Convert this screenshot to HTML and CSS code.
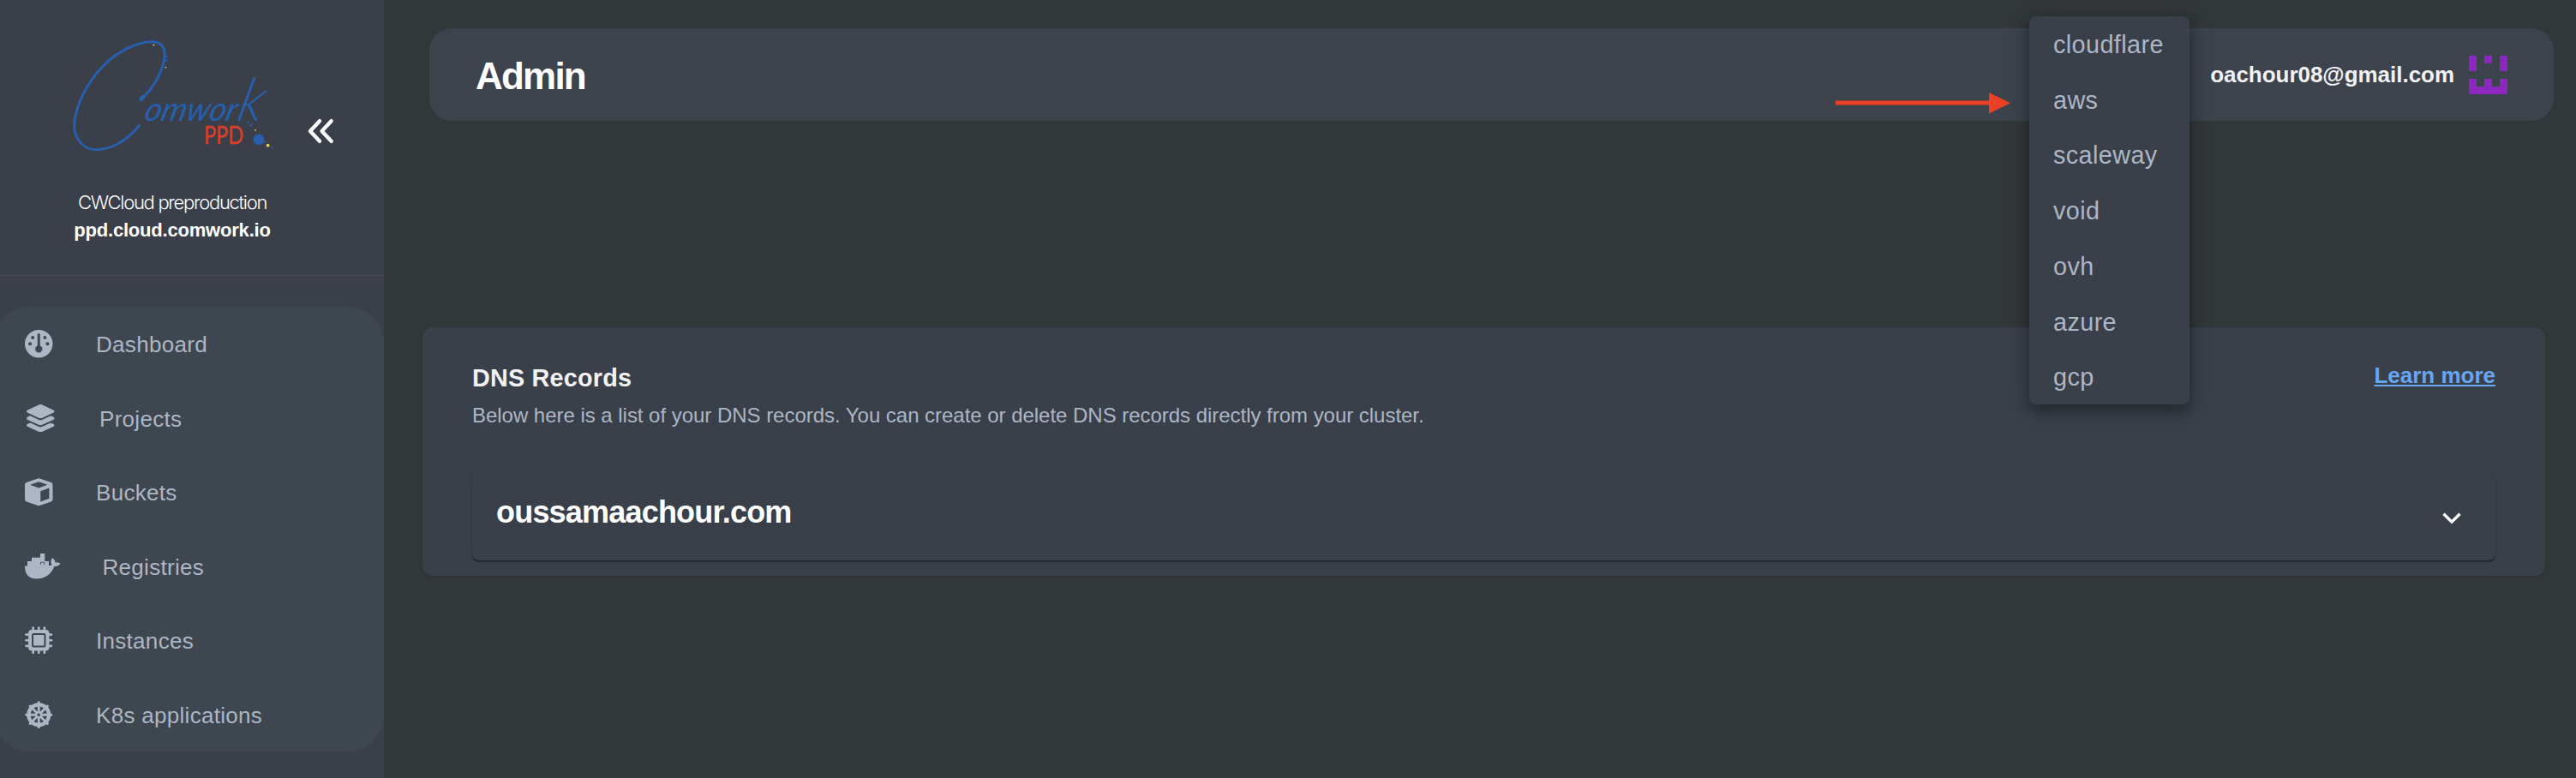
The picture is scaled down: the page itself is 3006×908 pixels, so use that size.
FILE: index.html
```html
<!DOCTYPE html>
<html lang="en">
<head>
<meta charset="utf-8">
<title>Admin</title>
<link rel="stylesheet" href="styles.css">
</head>
<body>
<div class="app">
  <aside class="sidebar">
    <div class="sidebar-head">
      <div class="brand">
        <svg class="logo" viewBox="72 40 258 145" role="img" aria-label="Comwork PPD">
          <path class="logo-swash" d="M165.700 115C174 107 181 97 184.500 90C189 81 192 71 192.300 64C192.500 54 187 48.700 176.700 48.700C167 48.800 157 52 146.700 57.300C133 64.500 122 74 113.300 85C104.500 96 97.500 107 93.300 118.300C89.500 128 87 137 86.700 145C86.500 152 87.500 158 91.700 163.500C96.500 170.500 103 174.700 111.700 174.700C120 174.700 128 173 136.700 168.300C146 163 156 155 162.700 146"/>
          <path class="logo-knob" d="M164.800 115.600l2.400-2.600"/>
          <text class="logo-word" transform="translate(167 141) skewX(-14)" textLength="137" lengthAdjust="spacingAndGlyphs">omwor<tspan class="logo-k">k</tspan></text>
          <text class="logo-tag" x="238" y="168" textLength="46" lengthAdjust="spacingAndGlyphs">PPD</text>
          <g class="logo-blue">
            <circle cx="195" cy="66" r="1.300"/><circle cx="194.300" cy="70.600" r="1.500"/>
            <circle cx="289.500" cy="142.500" r="1.300"/><circle cx="292.600" cy="146" r="1.500"/>
            <path d="M302 156.500a6.200 6.200 0 0 1 6 7.500l2 2.500-4 1a6.300 6.300 0 1 1-4-11z"/>
            <circle cx="317.300" cy="172.300" r="1"/>
          </g>
          <g class="logo-gold">
            <circle cx="179.300" cy="52.600" r="1"/><circle cx="193.500" cy="78.600" r=".9"/>
            <circle cx="298" cy="152" r=".9"/><circle cx="312.600" cy="169.700" r="1.900"/>
          </g>
        </svg>
        <div class="brand-name">CWCloud preproduction</div>
        <div class="brand-host">ppd.cloud.comwork.io</div>
      </div>
      <svg class="collapse" viewBox="0 0 32 30"><path d="M15 3.200L4 15l11 11.800M28.600 3.200L17.600 15l11 11.800"/></svg>
    </div>
    <nav class="nav">
      <a class="nav-item">
        <svg class="icon" viewBox="0 0 32 32"><circle class="fill" cx="16" cy="16" r="16"/><g class="cut"><circle cx="9" cy="8.800" r="2"/><circle cx="23" cy="8.800" r="2"/><circle cx="6" cy="16" r="2"/><circle cx="26" cy="16" r="2"/><circle cx="16" cy="22" r="4.100"/><rect x="14.500" y="4" width="3" height="18" rx="1.500"/></g></svg>
        <span>Dashboard</span>
      </a>
      <a class="nav-item">
        <svg class="icon icon-layers" viewBox="0 0 576 512"><path class="fill" d="M264.500 5.200c14.900-6.900 32.100-6.900 47 0l218.600 101c8.500 3.900 13.900 12.400 13.900 21.800s-5.400 17.900-13.900 21.800l-218.600 101c-14.900 6.900-32.100 6.900-47 0L45.900 149.800C37.400 145.800 32 137.300 32 128s5.400-17.900 13.900-21.800L264.500 5.200zM476.900 209.600l53.200 24.600c8.500 3.900 13.900 12.400 13.900 21.800s-5.400 17.900-13.900 21.800l-218.600 101c-14.900 6.900-32.100 6.900-47 0L45.900 277.800C37.400 273.800 32 265.300 32 256s5.400-17.900 13.900-21.800l53.200-24.600 152 70.200c23.400 10.800 50.400 10.800 73.800 0l152-70.200zm-152 198.200l152-70.200 53.200 24.600c8.500 3.900 13.900 12.400 13.900 21.800s-5.400 17.900-13.900 21.800l-218.600 101c-14.900 6.900-32.100 6.900-47 0L45.900 405.800C37.400 401.800 32 393.300 32 384s5.400-17.900 13.900-21.800l53.200-24.600 152 70.200c23.400 10.800 50.400 10.800 73.800 0z"/></svg>
        <span>Projects</span>
      </a>
      <a class="nav-item">
        <svg class="icon" viewBox="0 0 32 32"><path class="fill" d="M14.900.4a3.500 3.500 0 0 1 2.200 0l13 4.600A3 3 0 0 1 32 7.800v16.400a3 3 0 0 1-1.900 2.800l-13 4.600a3.500 3.500 0 0 1-2.200 0L1.900 27A3 3 0 0 1 0 24.200V7.800A3 3 0 0 1 1.900 5z"/><path class="cut" d="M16 4.200l10 3.500-10 3.600L6 7.700zM18 15l10-3.600v11.900L18 27z"/></svg>
        <span>Buckets</span>
      </a>
      <a class="nav-item">
        <svg class="icon icon-docker" viewBox="0 0 42 32"><path class="fill" d="M0 15.500h3V10h5V5.700h10V1h5.300v9H28v5c2.300 0 3-.4 3.500-.8-1.700-3-1.500-5.700.7-8 2 1.400 3.200 3.200 3.300 5.400 2.300-.5 4.500-.1 6 1-1.200 2.600-3.700 3.700-7 3.500C30.500 25.500 23.500 30.500 14 30.500 4 30.500 0 25 0 15.500z"/><path class="notch" d="M18.500 14v-2.800h4V14"/></svg>
        <span>Registries</span>
      </a>
      <a class="nav-item">
        <svg class="icon" viewBox="0 0 32 32"><path class="pins" d="M9.500 1.500v29M16 1.500v29M22.500 1.500v29M1.500 9.500h29M1.500 16h29M1.500 22.500h29"/><rect class="fill" x="4" y="4" width="24" height="24" rx="4"/><rect class="ring" x="8.900" y="8.900" width="14.200" height="14.200" rx="1.500"/></svg>
        <span>Instances</span>
      </a>
      <a class="nav-item">
        <svg class="icon" viewBox="0 0 32 32"><circle class="wheel" cx="16" cy="16" r="11.700"/><path class="spokes" d="M16 1.600v28.800M1.600 16h28.800M6 6l20 20M26 6L6 26"/><circle class="fill" cx="16" cy="16" r="4.200"/><circle class="cut" cx="16" cy="16" r="1.700"/></svg>
        <span>K8s applications</span>
      </a>
    </nav>
  </aside>

  <main class="main">
    <header class="topbar">
      <h1 class="page-title">Admin</h1>
      <div class="user">
        <span class="user-mail">oachour08@gmail.com</span>
        <svg class="avatar" viewBox="0 0 5 5" shape-rendering="crispEdges"><path d="M0 0h1v2H0zM2 0h1v1H2zM4 0h1v2H4zM0 3h1v1h1V3h1v1h1V3h1v2H0z"/></svg>
      </div>
    </header>

    <section class="card">
      <div class="card-head">
        <div>
          <h2 class="card-title">DNS Records</h2>
          <p class="card-text">Below here is a list of your DNS records. You can create or delete DNS records directly from your cluster.</p>
        </div>
        <a class="learn">Learn more</a>
      </div>
      <div class="accordion">
        <span class="zone">oussamaachour.com</span>
        <svg class="chevron" viewBox="0 0 22 14"><path d="M1.500 1.800L11 11.200l9.500-9.400"/></svg>
      </div>
    </section>
  </main>

  <svg class="arrow" viewBox="0 0 204 26"><path d="M0 10.500h179V1l25 12.200L179 25.500v-10H0z"/></svg>
  <ul class="menu">
    <li>cloudflare</li>
    <li>aws</li>
    <li>scaleway</li>
    <li>void</li>
    <li>ovh</li>
    <li>azure</li>
    <li>gcp</li>
  </ul>
</div>
</body>
</html>
```
FILE: styles.css
```css
* { box-sizing: border-box; }

body {
  margin: 0;
  background: #32373a;
  font-family: "Liberation Sans", Arial, sans-serif;
  color: #fff;
}

.app {
  position: relative;
  display: flex;
  width: 3006px;
  height: 908px;
  overflow: hidden;
}

/* Sidebar */
.sidebar {
  flex: none;
  width: 448px;
  background: #3a3f4a;
}

.sidebar-head {
  display: flex;
  align-items: flex-start;
  height: 322px;
  padding: 40px 0 0 72px;
  border-bottom: 1px solid #4a4b57;
}

.brand {
  width: 258px;
  text-align: center;
}

.logo { display: block; width: 258px; height: 145px; }
.logo-swash { fill: none; stroke: #285fad; stroke-width: 3; stroke-linecap: round; }
.logo-knob { stroke: #285fad; stroke-width: 5; stroke-linecap: round; }
.logo-word { font-family: Lato, sans-serif; font-style: italic; font-weight: 400; font-size: 39px; fill: #285fad; }
.logo-k { font-size: 70px; font-weight: 300; }
.logo-tag { font-family: Lato, sans-serif; font-size: 29px; fill: #d8402c; stroke: #d8402c; stroke-width: 0.5; }
.logo-blue { fill: #285fad; }
.logo-gold { fill: #f3d03e; }

.brand-name {
  margin-top: 34px;
  font-family: Inter, sans-serif;
  font-weight: 300;
  font-size: 22px;
  line-height: 34px;
  letter-spacing: -1.3px;
  white-space: nowrap;
}

.brand-host {
  font-weight: 700;
  font-size: 22px;
  line-height: 32px;
  letter-spacing: -0.2px;
  white-space: nowrap;
}

.collapse { width: 32px; height: 30px; margin: 98px 0 0 28px; }
.collapse path { fill: none; stroke: #fff; stroke-width: 4.4; stroke-linecap: round; stroke-linejoin: round; }

.nav {
  margin: 36px 0 0 -8px;
  padding-left: 37px;
  border-radius: 42px;
  background: #3e4750;
}

.nav-item {
  display: flex;
  align-items: center;
  gap: 50.5px;
  height: 86.5px;
  color: #adb6c4;
  font-size: 26px;
  letter-spacing: 0.3px;
}

.nav-item span { padding-top: 3px; }

.icon { width: 32.5px; height: 32.5px; flex: none; }
.icon-layers { width: 36.5px; }
.icon-docker { width: 42px; height: 32px; margin-right: -2px; }
.fill { fill: #adb6c4; }
.cut { fill: #3e4750; }
.pins { stroke: #adb6c4; stroke-width: 2.6; stroke-linecap: round; }
.ring { fill: none; stroke: #3e4750; stroke-width: 2; }
.notch { fill: none; stroke: #3e4750; stroke-width: 0.8; }
.wheel { fill: none; stroke: #adb6c4; stroke-width: 4.2; }
.spokes { stroke: #adb6c4; stroke-width: 2.8; stroke-linecap: round; }

/* Main column */
.main { flex: 1; padding: 33px 26px 0 45px; }

.topbar {
  display: flex;
  align-items: center;
  justify-content: space-between;
  height: 108px;
  margin-left: 8px;
  padding: 0 54px;
  border-radius: 26px;
  background: #3c434d;
}

.page-title {
  margin: 0;
  padding-top: 3px;
  font-size: 44px;
  line-height: 50px;
  letter-spacing: -1.8px;
}

.user { display: flex; align-items: center; gap: 17px; }
.user-mail { padding-top: 1px; font-size: 26px; font-weight: 700; letter-spacing: -0.03px; color: #f2f2f2; }
.avatar { width: 45px; height: 45px; }
.avatar path { fill: #8c28c0; }

.card {
  height: 290px;
  margin: 241px 10px 0 0;
  padding: 42px 58px 0 58px;
  border-radius: 12px;
  background: #3a404a;
  box-shadow: 0 1px 3px rgba(0, 0, 0, 0.15);
}

.card-head {
  display: flex;
  justify-content: space-between;
  height: 128px;
}

.card-title {
  margin: 0;
  color: #f2f2f2;
  font-size: 28.8px;
  line-height: 34px;
  letter-spacing: 0.2px;
}

.card-text {
  margin: 10px 0 0;
  color: #adb6c4;
  font-size: 24px;
  line-height: 34px;
  letter-spacing: -0.03px;
}

.learn {
  color: #66a6f2;
  font-size: 26px;
  font-weight: 700;
  line-height: 28px;
  text-decoration: underline;
  text-decoration-thickness: 2px;
  text-underline-offset: 2px;
}

.accordion {
  display: flex;
  align-items: center;
  justify-content: space-between;
  height: 102px;
  padding: 0 40px 0 28px;
  border-radius: 8px;
  box-shadow: 0 2px 1px rgba(0, 0, 0, 0.28), 0 1px 3px rgba(0, 0, 0, 0.25);
  background: #3a404a;
}

.zone {
  margin-top: -10px;
  font-size: 36px;
  font-weight: 700;
  letter-spacing: -0.8px;
}

.chevron { width: 22px; height: 14px; margin-top: 3px; }
.chevron path { fill: none; stroke: #fff; stroke-width: 3.4; }

/* Overlays */
.arrow {
  position: absolute;
  left: 2142px;
  top: 107px;
  width: 204px;
  height: 26px;
  fill: #ec4026;
}

.menu {
  position: absolute;
  left: 2368px;
  top: 19px;
  width: 187px;
  height: 453px;
  margin: 0;
  padding: 1px 0 0 28px;
  list-style: none;
  border-radius: 8px;
  background: #3a404a;
  box-shadow: 0 8px 16px rgba(0, 0, 0, 0.28), 0 4px 28px rgba(0, 0, 0, 0.2);
  color: #adb6c4;
  font-size: 28.8px;
  line-height: 64.7px;
  letter-spacing: 0.4px;
}
```
